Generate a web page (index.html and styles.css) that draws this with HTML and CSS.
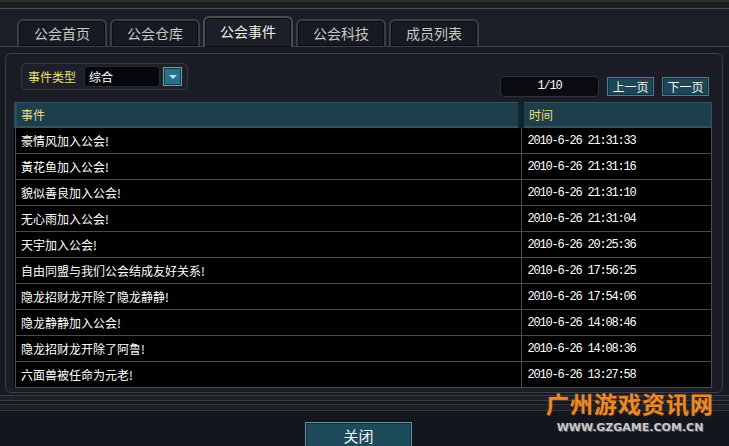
FILE: index.html
```html
<!DOCTYPE html>
<html lang="zh-CN">
<head>
    <meta charset="UTF-8">
    <title>公会事件</title>
    <link rel="stylesheet" href="styles.css">
</head>
<body>
    <div class="window">
        <div class="topbar"></div>
        <div class="tabs">
            <div class="tab">公会首页</div>
            <div class="tab">公会仓库</div>
            <div class="tab active">公会事件</div>
            <div class="tab">公会科技</div>
            <div class="tab">成员列表</div>
        </div>
        <div class="panel">
            <div class="toolbar">
                <div class="filter">
                    <span class="filter-label">事件类型</span>
                    <span class="select">综合</span>
                    <span class="select-btn"><i></i></span>
                </div>
                <div class="pager">
                    <span class="page-num">1/10</span>
                    <button class="page-btn">上一页</button>
                    <button class="page-btn">下一页</button>
                </div>
            </div>
            <table class="events">
                <thead>
                    <tr><th class="col-event">事件</th><th>时间</th></tr>
                </thead>
                <tbody>
                    <tr><td>豪情风加入公会!</td><td class="time">2010-6-26 21:31:33</td></tr>
                    <tr><td>黃花鱼加入公会!</td><td class="time">2010-6-26 21:31:16</td></tr>
                    <tr><td>貌似善良加入公会!</td><td class="time">2010-6-26 21:31:10</td></tr>
                    <tr><td>无心雨加入公会!</td><td class="time">2010-6-26 21:31:04</td></tr>
                    <tr><td>天宇加入公会!</td><td class="time">2010-6-26 20:25:36</td></tr>
                    <tr><td>自由同盟与我们公会结成友好关系!</td><td class="time">2010-6-26 17:56:25</td></tr>
                    <tr><td>隐龙招财龙开除了隐龙静静!</td><td class="time">2010-6-26 17:54:06</td></tr>
                    <tr><td>隐龙静静加入公会!</td><td class="time">2010-6-26 14:08:46</td></tr>
                    <tr><td>隐龙招财龙开除了阿鲁!</td><td class="time">2010-6-26 14:08:36</td></tr>
                    <tr><td>六面兽被任命为元老!</td><td class="time">2010-6-26 13:27:58</td></tr>
                </tbody>
            </table>
        </div>
        <div class="footer-lines"></div>
        <div class="footer">
            <button class="close-btn">关闭</button>
        </div>
        <div class="watermark">
            <div class="wm-title">广州游戏资讯网</div>
            <div class="wm-url">WWW.GZGAME.COM.CN</div>
        </div>
    </div>
</body>
</html>
```

FILE: styles.css
```css
/* 基础 */
body {
    margin: 0;
    padding: 0;
    background: #13161d;
    font-family: "Noto Sans CJK SC", "DejaVu Sans", sans-serif;
    font-size: 12px;
    color: #fff;
}

.window {
    position: relative;
    width: 729px;
    height: 446px;
    overflow: hidden;
    background: #181b22;
}

.topbar {
    height: 6px;
    border-top: 2px solid #2c3030;
    border-bottom: 1px solid #4a4e4e;
    background: #1a1d20;
}

/* 标签页 */
.tabs {
    display: flex;
    align-items: flex-end;
    gap: 3px;
    height: 37px;
    padding-left: 17px;
    border-bottom: 1px solid #3c4046;
    background: #1b1e26;
}

.tab {
    width: 86px;
    height: 25px;
    line-height: 25px;
    text-align: center;
    font-size: 14px;
    color: #c8c8c0;
    background: #161a22;
    border: 2px solid #3a3e40;
    border-bottom: none;
    border-radius: 6px 6px 0 0;
    box-shadow: inset 0 0 0 1px #0c0e12;
}

.tab.active {
    height: 29px;
    line-height: 27px;
    color: #f0f0e8;
    background: #1c1f27;
    border-color: #4a4e50;
    margin-bottom: -1px;
}

/* 主面板 */
.panel {
    margin: 6px 6px 0 5px;
    padding: 9px 10px 4px 8px;
    border: 1px solid #3a3f48;
    border-radius: 6px;
    background: #1a1d25;
}

.toolbar {
    display: flex;
    justify-content: space-between;
    align-items: flex-end;
    height: 34px;
    margin-bottom: 5px;
}

.filter {
    display: flex;
    align-items: center;
    align-self: flex-start;
    height: 25px;
    margin-left: 7px;
    padding: 0 5px 0 6px;
    border: 1px solid #363a42;
    border-radius: 5px;
    background: #1d2028;
}

.filter-label {
    color: #e8e070;
    margin-right: 8px;
}

.select {
    width: 70px;
    height: 19px;
    line-height: 19px;
    padding-left: 4px;
    background: #05070a;
    border: 1px solid #262a30;
    border-radius: 3px;
}

.select-btn {
    display: flex;
    align-items: center;
    justify-content: center;
    width: 17px;
    height: 17px;
    margin-left: 3px;
    background: #2c6f88;
    border: 1px solid #6aa0b4;
    box-shadow: inset 0 0 0 1px #173a48;
}

.select-btn i {
    width: 0;
    height: 0;
    border-left: 4px solid transparent;
    border-right: 4px solid transparent;
    border-top: 4px solid #9fe8ff;
}

.pager {
    display: flex;
    align-items: center;
    gap: 8px;
    margin-right: 3px;
}

.page-num {
    width: 97px;
    height: 19px;
    line-height: 19px;
    text-align: center;
    font-family: "Liberation Mono", monospace;
    font-size: 12px;
    letter-spacing: -1.2px;
    background: #090b0f;
    border: 1px solid #2e3238;
    border-radius: 4px;
}

.page-btn {
    width: 47px;
    height: 19px;
    padding: 0;
    font-family: inherit;
    font-size: 12px;
    color: #f2f2f2;
    background: #1c4758;
    border: 1px solid #4f7c8c;
    box-shadow: inset 0 0 0 1px #123040;
}

/* 事件表格 */
.events {
    width: 698px;
    border-collapse: collapse;
    background: #000;
}

.events th {
    height: 23px;
    padding: 0 5px;
    text-align: left;
    font-weight: normal;
    color: #e6dc88;
    background: #1c3f4b;
    border: 1px solid #2f5563;
    border-bottom: 2px solid #3c5058;
}

.events th.col-event {
    width: 492px;
    padding-left: 4px;
    border-left: 3px solid #2c4e5a;
    border-right: 6px solid #10262e;
}

.events td {
    height: 25px;
    padding: 0 5px;
    border: 1px solid #4a4a4a;
    border-top: none;
    color: #fff;
}

.events td.time {
    font-family: "Liberation Mono", monospace;
    font-size: 12px;
    letter-spacing: -1.2px;
    padding-left: 6px;
}

/* 底部 */
.footer-lines {
    height: 14px;
    margin-top: 2px;
    border-top: 1px solid #3a3d44;
    border-bottom: 1px solid #33363c;
    background: linear-gradient(#1e2128 0 4px, #3a3d42 4px 5px, #15181d 5px 8px, #2e3136 8px 9px, #1c1f25 9px);
}

.footer {
    display: flex;
    justify-content: center;
    padding-top: 11px;
    padding-right: 12px;
    background: #13161d;
    height: 40px;
}

.close-btn {
    width: 107px;
    height: 30px;
    padding: 0 0 4px;
    font-family: inherit;
    font-size: 15px;
    color: #f4f4f4;
    background: #1c4a5a;
    border: 1px solid #6a94a2;
    box-shadow: inset 0 0 0 1px #123040;
}

/* 水印 */
.watermark {
    position: absolute;
    left: 540px;
    top: 386px;
    width: 180px;
    text-align: center;
}

.wm-title {
    font-size: 23px;
    font-weight: bold;
    letter-spacing: 1px;
    color: #e88a2c;
    text-shadow: 0 0 2px #7a3a10;
}

.wm-url {
    margin-top: 1px;
    font-family: "DejaVu Sans", sans-serif;
    font-size: 11px;
    font-weight: bold;
    color: #c8c8c8;
    text-shadow: 1px 1px 0 #555;
}
```
